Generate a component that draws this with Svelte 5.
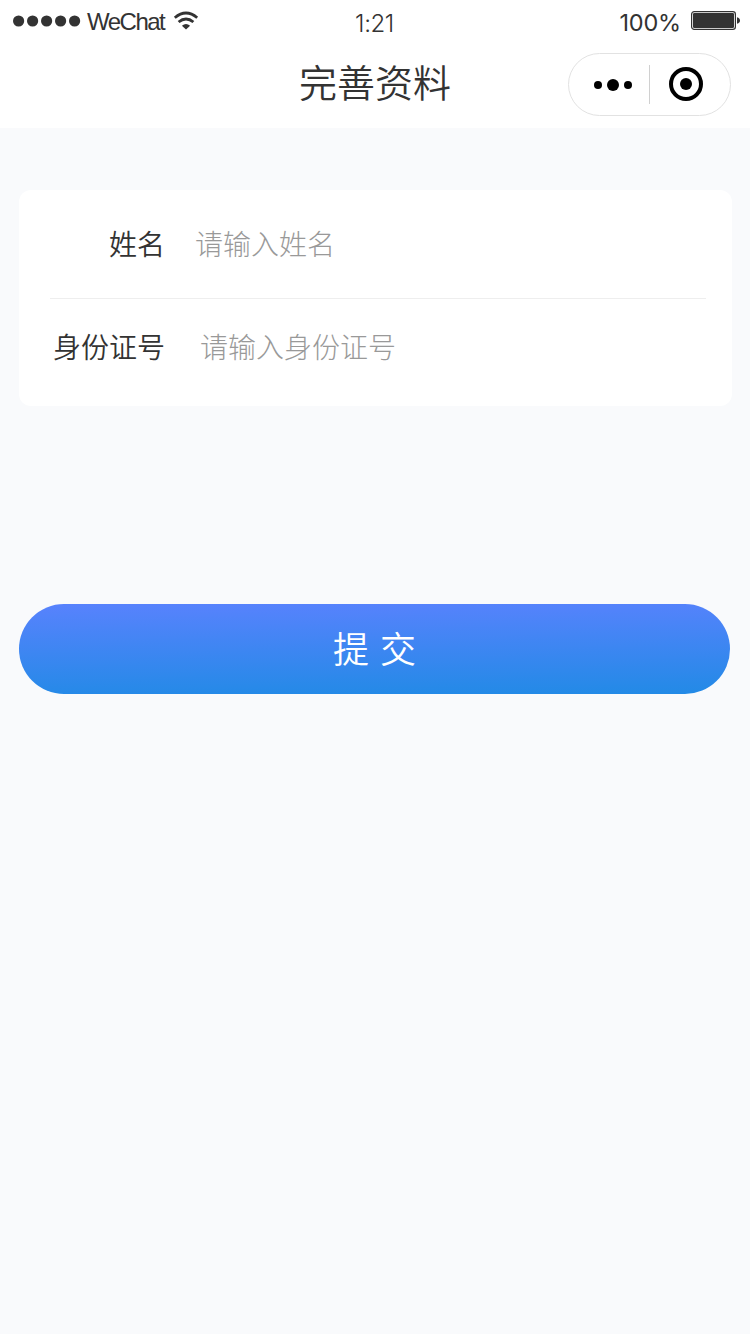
<script lang="ts">
    type Field = { key: string; label: string; placeholder: string }

    const fields: Field[] = [
        { key: "name", label: "姓名", placeholder: "请输入姓名" },
        { key: "idcard", label: "身份证号", placeholder: "请输入身份证号" },
    ]

    let form: Record<string, string> = $state({ name: "", idcard: "" })

    function submit(e: Event): void {
        e.preventDefault()
    }
</script>

<div class="page">
    <header>
        <div class="status">
            <div class="carrier">
                <svg class="signal" width="68" height="12" viewBox="0 0 68 12">
                    {#each [0, 1, 2, 3, 4] as i}
                        <circle cx={5.6 + i * 14} cy="6" r="5.6" />
                    {/each}
                </svg>
                <span class="network">WeChat</span>
                <svg class="wifi" width="26" height="20" viewBox="0 0 26 20">
                    <path d="M1.8 6.7Q13 -2.7 24.2 6.7" />
                    <path d="M5.6 11Q13 4.9 20.4 11" />
                    <path class="tip" d="M8.9 14.8Q13 11.4 17.1 14.8L13 18.4Z" />
                </svg>
            </div>
            <span class="time">1:21</span>
            <div class="power">
                <span class="percent">100%</span>
                <svg class="battery" width="50" height="20" viewBox="0 0 50 20">
                    <rect class="shell" x="0.6" y="0.6" width="43.8" height="17.8" rx="2.6" />
                    <rect x="2" y="2" width="41" height="15" rx="1.2" />
                    <path d="M46 6.2Q49 7 49 9.5T46 12.8Z" />
                </svg>
            </div>
        </div>
        <div class="nav">
            <h1>完善资料</h1>
            <div class="capsule">
                <svg class="more" width="38" height="14" viewBox="0 0 38 14">
                    <circle cx="4" cy="7" r="4" />
                    <circle cx="19" cy="7" r="6" />
                    <circle cx="34" cy="7" r="4" />
                </svg>
                <i></i>
                <svg class="close" width="34" height="34" viewBox="0 0 34 34">
                    <circle class="ring" cx="17" cy="17" r="15" />
                    <circle cx="17" cy="17" r="6" />
                </svg>
            </div>
        </div>
    </header>

    <form onsubmit={submit}>
        <div class="card">
            {#each fields as field (field.key)}
                <label class={field.key}>
                    <span>{field.label}</span>
                    <input type="text" placeholder={field.placeholder} bind:value={form[field.key]} />
                </label>
            {/each}
        </div>
        <button type="submit">提 交</button>
    </form>
</div>

<style>
    .page {
        min-height: 1334px;
        box-sizing: border-box;
        background: #f9fafc;
        color: #333;
        font-family: "Noto Sans CJK SC", sans-serif;
    }
    header {
        height: 128px;
        background: #fff;
    }
    .status {
        display: grid;
        grid-template-columns: 1fr auto 1fr;
        align-items: center;
        box-sizing: border-box;
        height: 40px;
        padding: 0 9px 0 13px;
        font: 24px/32px Inter, sans-serif;
        fill: #333;
    }
    .carrier,
    .power {
        display: flex;
        align-items: center;
        height: 40px;
    }
    .power {
        justify-content: flex-end;
    }
    .network {
        margin: 3px 9px 0 6px;
        font: 24px/32px "Liberation Sans", sans-serif;
        letter-spacing: -1.5px;
    }
    .signal {
        margin-top: 1px;
    }
    .wifi {
        margin-top: 2px;
    }
    .wifi path {
        fill: none;
        stroke: #333;
        stroke-width: 2.8;
    }
    .wifi .tip {
        fill: #333;
        stroke: none;
    }
    .time {
        padding-top: 7px;
        padding-right: 5px;
        font-size: 24px;
        font-weight: 350;
        letter-spacing: -0.4px;
    }
    .percent {
        margin-right: 10px;
        padding-top: 6px;
        font-size: 23.5px;
        font-weight: 420;
        letter-spacing: -0.2px;
    }
    .battery {
        margin-top: 2px;
    }
    .battery .shell {
        fill: none;
        stroke: #333;
        stroke-width: 1.2;
    }
    .nav {
        display: grid;
        grid-template-columns: 1fr auto 1fr;
        align-items: start;
        padding-right: 19px;
        padding-left: 19px;
    }
    h1 {
        grid-column: 2;
        margin: 13px 0 0;
        font-size: 38px;
        line-height: 56px;
        font-weight: 350;
    }
    .capsule {
        display: flex;
        align-items: center;
        justify-self: end;
        box-sizing: border-box;
        width: 163px;
        height: 63px;
        margin-top: 13px;
        padding-left: 25px;
        border: 1px solid #e2e2e2;
        border-radius: 32px;
    }
    .capsule i {
        width: 1px;
        height: 39px;
        margin: 0 19px 0 17px;
        background: #d0d0d0;
    }
    .close {
        margin-top: -1px;
    }
    .ring {
        fill: none;
        stroke: #000;
        stroke-width: 4;
    }
    form {
        display: flex;
        flex-direction: column;
        padding: 62px 20px 0 19px;
    }
    .card {
        box-sizing: border-box;
        width: 713px;
        height: 216px;
        padding: 0 26px 0 31px;
        border-radius: 12px;
        background: #fff;
    }
    label {
        display: flex;
        align-items: center;
        height: 108px;
        font-size: 28px;
        line-height: 42px;
    }
    label + label {
        height: 96px;
        border-top: 1px solid #eee;
    }
    label span {
        width: 115px;
        padding-bottom: 3px;
        text-align: right;
        font-weight: 350;
    }
    input {
        flex: 1;
        min-width: 0;
        height: 42px;
        margin: 0 0 2px 30px;
        padding: 0;
        border: none;
        outline: none;
        background: none;
        color: #333;
        font: inherit;
    }
    input::placeholder {
        color: #999;
        font-weight: 300;
        opacity: 1;
    }
    .idcard input {
        margin-left: 35px;
    }
    button {
        height: 90px;
        margin-top: 198px;
        padding: 0 0 3px;
        border: none;
        border-radius: 45px;
        background: linear-gradient(179.4deg, #5882fd, #228ae6);
        color: #fff;
        font: 350 36px/87px "Noto Sans CJK SC", sans-serif;
        word-spacing: 3px;
    }
</style>
